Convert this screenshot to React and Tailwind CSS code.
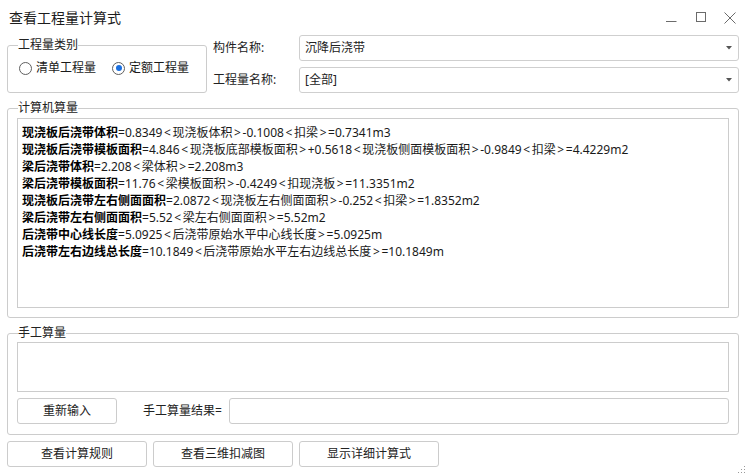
import React from 'react';

const font = { fontFamily: '"Noto Sans", "Noto Sans CJK SC", sans-serif' };

const calcLines = [
    ['现浇板后浇带体积', '=0.8349<现浇板体积>-0.1008<扣梁>=0.7341m3'],
    ['现浇板后浇带模板面积', '=4.846<现浇板底部模板面积>+0.5618<现浇板侧面模板面积>-0.9849<扣梁>=4.4229m2'],
    ['梁后浇带体积', '=2.208<梁体积>=2.208m3'],
    ['梁后浇带模板面积', '=11.76<梁模板面积>-0.4249<扣现浇板>=11.3351m2'],
    ['现浇板后浇带左右侧面面积', '=2.0872<现浇板左右侧面面积>-0.252<扣梁>=1.8352m2'],
    ['梁后浇带左右侧面面积', '=5.52<梁左右侧面面积>=5.52m2'],
    ['后浇带中心线长度', '=5.0925<后浇带原始水平中心线长度>=5.0925m'],
    ['后浇带左右边线总长度', '=10.1849<后浇带原始水平左右边线总长度>=10.1849m'],
];

// angle brackets are drawn a bit wider in the original UI font
const spaced = (text) =>
    text.split(/([<>])/).map((part, i) =>
        part === '<' || part === '>'
            ? <span key={i} className="mx-[1.6px]">{part}</span>
            : part
    );

const Radio = ({ checked, label }) => (
    <label className="flex items-center gap-[4px]">
        <span className="w-[13px] h-[13px] rounded-full border border-[#5f5f5f] flex items-center justify-center bg-white">
            {checked && <span className="w-[6px] h-[6px] rounded-full bg-[#1a6fe0]" />}
        </span>
        <span className="text-[12px] text-[#1a1a1a]">{label}</span>
    </label>
);

const Combo = ({ value }) => (
    <div className="flex-1 h-[26px] border border-[#cfcfcf] rounded-[3px] flex items-center pl-[5px] pr-[6px] text-[12px] text-[#222]">
        <span className="flex-1">{value}</span>
        <svg width="6" height="4" viewBox="0 0 6 4"><path d="M0 0h6L3 3.5z" fill="#555" /></svg>
    </div>
);

const Group = ({ title, className, children }) => (
    <fieldset className={`border border-[#cccccc] rounded-[3px] px-[9px] min-w-0 ${className}`}>
        <legend className="ml-[1px] px-0 text-[12px] leading-[16px] text-[#222]">{title}</legend>
        {children}
    </fieldset>
);

const Button = ({ children, className = '' }) => (
    <button className={`h-[26px] border border-[#cccccc] rounded-[3px] bg-white text-[12px] text-[#222] ${className}`}>
        {children}
    </button>
);

export default function App() {
    return (
        <div className="w-[747px] h-[475px] bg-white overflow-hidden relative flex flex-col" style={font}>
            {/* title bar */}
            <div className="h-[35px] flex items-center pl-[9px] pr-[11px] shrink-0">
                <span className="flex-1 text-[14px] text-[#1c1c1c]">查看工程量计算式</span>
                <div className="flex items-center gap-[18px]">
                    <svg width="11" height="11" viewBox="0 0 11 11"><path d="M0 9.5h10.5" stroke="#6b6b6b" strokeWidth="1" /></svg>
                    <svg width="11" height="11" viewBox="0 0 11 11"><rect x="1.5" y="0.5" width="9" height="9" fill="none" stroke="#6b6b6b" strokeWidth="1" /></svg>
                    <svg width="12" height="12" viewBox="0 0 12 12"><path d="M0.5 0.5l11 11M11.5 0.5l-11 11" stroke="#6b6b6b" strokeWidth="1" /></svg>
                </div>
            </div>

            {/* top row */}
            <div className="flex pl-[7px] pr-[8px] shrink-0">
                <Group title="工程量类别" className="w-[200px] h-[56px] mt-[2px]">
                    <div className="flex items-center gap-[16px] pl-[2px] pt-[6px]">
                        <Radio label="清单工程量" />
                        <Radio checked label="定额工程量" />
                    </div>
                </Group>
                <div className="flex-1 ml-[6px] flex flex-col gap-[6px]">
                    <div className="flex items-center">
                        <span className="w-[86px] text-[12px] text-[#222]">构件名称:</span>
                        <Combo value="沉降后浇带" />
                    </div>
                    <div className="flex items-center">
                        <span className="w-[86px] text-[12px] text-[#222]">工程量名称:</span>
                        <Combo value="[全部]" />
                    </div>
                </div>
            </div>

            {/* computer calculation */}
            <div className="px-[7px] pr-[8px] mt-[7px] shrink-0">
                <Group title="计算机算量" className="h-[218px]">
                    <div className="mt-[2px] h-[190px] border border-[#cccccc] pl-[4px] pt-[5px] text-[12px] leading-[17px]">
                        {calcLines.map(([label, rest], i) => (
                            <div key={i} className="whitespace-nowrap">
                                <span className="font-bold text-black">{label}</span>
                                <span className="text-[#1a1a1a]">{spaced(rest)}</span>
                            </div>
                        ))}
                    </div>
                </Group>
            </div>

            {/* manual calculation */}
            <div className="px-[7px] pr-[8px] mt-[7px] shrink-0">
                <Group title="手工算量" className="h-[110px]">
                    <div className="mt-[1px] h-[50px] border border-[#cccccc]" />
                    <div className="flex items-center mt-[6px]">
                        <Button className="w-[100px]">重新输入</Button>
                        <span className="ml-[26px] w-[86px] text-[12px] text-[#222]">手工算量结果=</span>
                        <div className="flex-1 h-[26px] border border-[#cccccc] rounded-[3px]" />
                    </div>
                </Group>
            </div>

            {/* bottom buttons */}
            <div className="flex gap-[6px] pl-[7px] mt-[6px] shrink-0">
                <Button className="w-[140px]">查看计算规则</Button>
                <Button className="w-[140px]">查看三维扣减图</Button>
                <Button className="w-[140px]">显示详细计算式</Button>
            </div>

            {/* resize grip */}
            <svg className="absolute right-[1px] bottom-[1px]" width="9" height="9" viewBox="0 0 9 9">
                <g fill="#9a9a9a">
                    <rect x="7" y="1" width="1" height="1" />
                    <rect x="4" y="4" width="1" height="1" />
                    <rect x="7" y="4" width="1" height="1" />
                    <rect x="1" y="7" width="1" height="1" />
                    <rect x="4" y="7" width="1" height="1" />
                    <rect x="7" y="7" width="1" height="1" />
                </g>
            </svg>
        </div>
    );
}
